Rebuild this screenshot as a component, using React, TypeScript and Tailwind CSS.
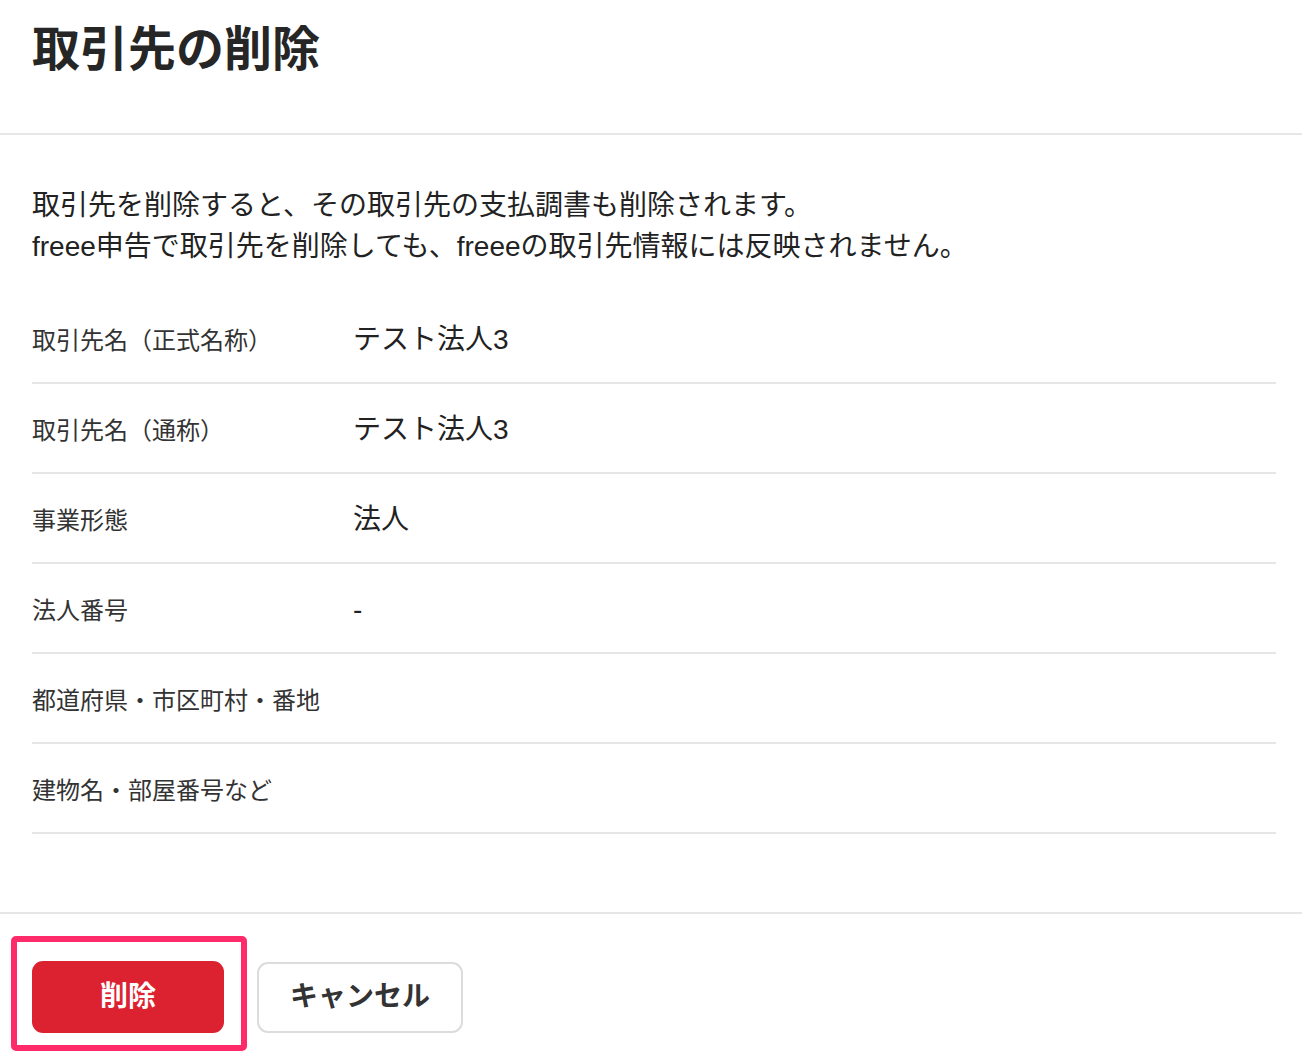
import React from "react";

const rows: { label: string; value: string }[] = [
  { label: "取引先名（正式名称）", value: "テスト法人3" },
  { label: "取引先名（通称）", value: "テスト法人3" },
  { label: "事業形態", value: "法人" },
  { label: "法人番号", value: "-" },
  { label: "都道府県・市区町村・番地", value: "" },
  { label: "建物名・部屋番号など", value: "" },
];

export default function App() {
  return (
    <div
      className="w-[1302px] h-[1056px] overflow-hidden bg-white text-[#222]"
      style={{ fontFamily: '"Liberation Sans", "Noto Sans CJK JP", sans-serif' }}
    >
      <header className="h-[135px] border-b-2 border-[#e6e6e6] pl-[32px] pt-[26px]">
        <h1 className="text-[48px] font-bold leading-[48px] text-[#262626]">取引先の削除</h1>
      </header>

      <section className="pl-[32px] pr-[26px] pt-[50px] pb-[78px]">
        <p className="text-[28px] leading-[41px] text-[#222]">
          取引先を削除すると、その取引先の支払調書も削除されます。
          <br />
          freee申告で取引先を削除しても、freeeの取引先情報には反映されません。
        </p>

        <div className="mt-[27px]">
          {rows.map((r) => (
            <div
              key={r.label}
              className="flex items-baseline border-b-2 border-[#e6e6e6] pt-[26px] pb-[21px]"
            >
              <div className="w-[321px] shrink-0 text-[24px] leading-[40px] text-[#333]">
                {r.label}
              </div>
              <div className="text-[28px] leading-[40px] text-[#222]">
                {r.value || "\u00a0"}
              </div>
            </div>
          ))}
        </div>
      </section>

      <footer className="border-t-2 border-[#e6e6e6] pl-[32px] pt-[47px]">
        <div className="flex items-center gap-[33px]">
          <div className="relative">
            <button className="h-[72px] w-[192px] rounded-[11px] bg-[#dc2231] text-[28px] font-bold text-white">
              削除
            </button>
            <div className="pointer-events-none absolute -left-[21px] -top-[25px] h-[115px] w-[236px] rounded-[5px] border-[6px] border-[#ff2a6a]" />
          </div>
          <button className="h-[71px] w-[206px] rounded-[11px] border-2 border-[#dcdcdc] bg-white text-[28px] font-bold text-[#333]">
            キャンセル
          </button>
        </div>
      </footer>
    </div>
  );
}
